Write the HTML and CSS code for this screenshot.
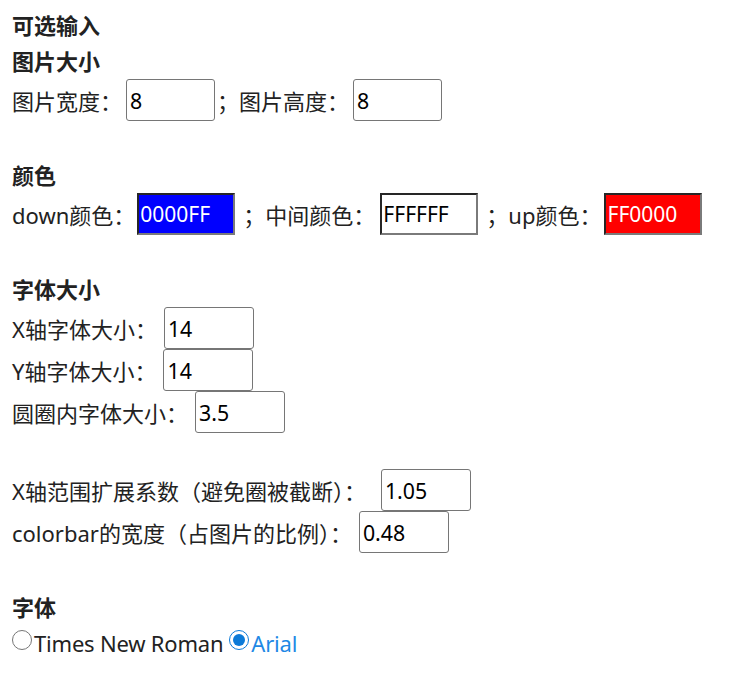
FILE: index.html
```html
<!DOCTYPE html>
<html lang="zh-CN">
<head>
<meta charset="utf-8">
<title>可选输入</title>
<link rel="stylesheet" href="styles.css">
</head>
<body>
<div class="form">
  <div class="line title">可选输入</div>
  <div class="line title">图片大小</div>
  <div class="row">
    <span>图片宽度：</span><input class="num w89 tight" type="text" value="8">
    <span class="sep">；</span><span>图片高度：</span><input class="num w89 tight" type="text" value="8">
  </div>
  <div class="line"></div>
  <div class="line title">颜色</div>
  <div class="row">
    <span>down颜色：</span><input class="color c-blue m2" type="text" value="0000FF">
    <span class="sep2">；</span><span>中间颜色：</span><input class="color c-white m5" type="text" value="FFFFFF">
    <span class="sep2">；</span><span>up颜色：</span><input class="color c-red m3" type="text" value="FF0000">
  </div>
  <div class="line"></div>
  <div class="line title">字体大小</div>
  <div class="row"><span>X轴字体大小：</span><input class="num w90" type="text" value="14"></div>
  <div class="row"><span>Y轴字体大小：</span><input class="num w90" type="text" value="14"></div>
  <div class="row"><span>圆圈内字体大小：</span><input class="num w90" type="text" value="3.5"></div>
  <div class="line"></div>
  <div class="row"><span>X轴范围扩展系数（避免圈被截断）：</span><input class="num w90 wide" type="text" value="1.05"></div>
  <div class="row"><span>colorbar的宽度（占图片的比例）：</span><input class="num w90" type="text" value="0.48"></div>
  <div class="line"></div>
  <div class="line title">字体</div>
  <div class="line radios">
    <label class="opt"><input type="radio" name="font" value="times"><span>Times New Roman</span></label>
    <label class="opt active"><input type="radio" name="font" value="arial" checked><span>Arial</span></label>
  </div>
</div>
</body>
</html>
```

FILE: styles.css
```css
html, body {
  margin: 0;
  padding: 0;
  background: #ffffff;
}

body {
  font-family: "Noto Sans", "Noto Sans CJK SC", sans-serif;
  font-size: 22px;
  color: #222222;
}

.form {
  padding: 7px 12px 0 12px;
}

.line {
  height: 36px;
  line-height: 36px;
  white-space: nowrap;
}

.title {
  font-weight: bold;
}

.row {
  height: 42px;
  display: flex;
  align-items: center;
  white-space: nowrap;
}

.num {
  box-sizing: border-box;
  height: 42px;
  margin: 0 0 0 7px;
  padding: 0 3px;
  border: 1px solid #767676;
  border-radius: 3px;
  font-family: "Noto Sans", "Noto Sans CJK SC", sans-serif;
  font-size: 21.33px;
  color: #000000;
  background: #ffffff;
}

.w89 { width: 89px; }
.w90 { width: 90px; }

.num.tight { margin-left: 4px; }
.num.wide { margin-left: 15px; }

.sep {
  margin-left: 2px;
}

.sep2 {
  margin-left: 8px;
}

.color {
  box-sizing: border-box;
  width: 98px;
  height: 42px;
  margin: 0;
  padding: 0 1px;
  border-style: solid;
  border-width: 2px;
  border-color: #262626 #7a7a7a #7a7a7a #262626;
  border-radius: 0;
  font-family: "Noto Sans", "Noto Sans CJK SC", sans-serif;
  font-size: 21px;
}

.color.m2 { margin-left: 2px; }
.color.m5 { margin-left: 5px; }
.color.m3 { margin-left: 3px; }

.c-blue { background: #0000ff; color: #ffffff; }
.c-white { background: #ffffff; color: #000000; }
.c-red { background: #ff0000; color: #ffffff; }

.radios {
  display: flex;
  align-items: center;
}

.opt {
  display: inline-flex;
  align-items: center;
}

.opt input {
  width: 20px;
  height: 20px;
  margin: -6px 2px 0 0;
  accent-color: #0b7ad8;
}

.opt span {
  letter-spacing: -0.2px;
}

.opt + .opt {
  margin-left: 6px;
}

.active span {
  color: #1e88e5;
}
```
